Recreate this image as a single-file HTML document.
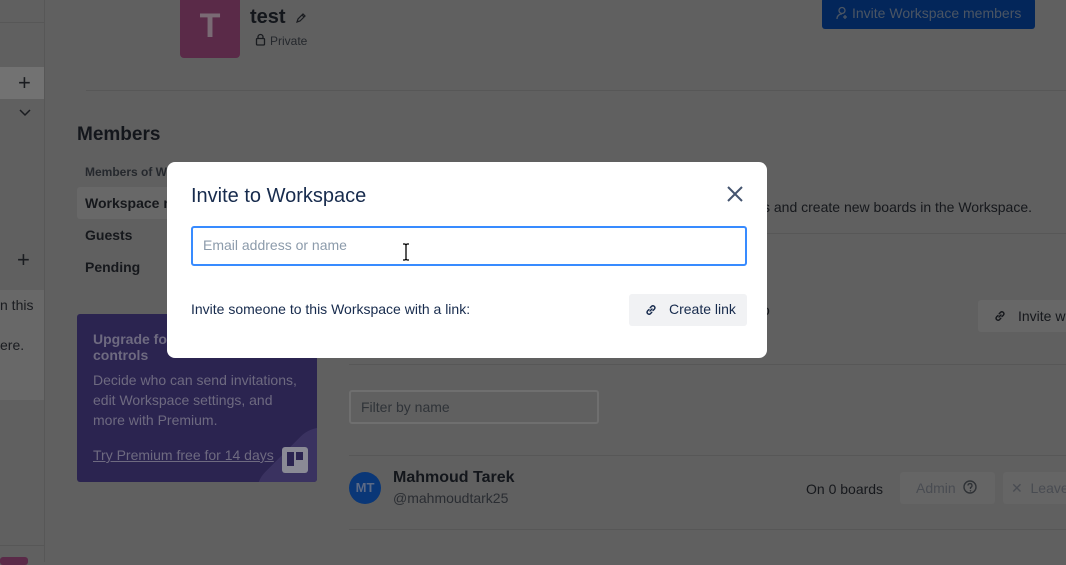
<!DOCTYPE html>
<html><head><meta charset="utf-8"><style>
*{margin:0;padding:0;box-sizing:border-box}
body{width:1066px;height:562px;overflow:hidden;background:#606060;font-family:"Liberation Sans",sans-serif;position:relative;color:#16181c}
.a{position:absolute;white-space:nowrap}
.hr{position:absolute;height:1px;background:#575757}
</style></head><body>
<!-- sidebar -->
<div class="a" style="left:44px;top:0;width:1px;height:562px;background:#575757"></div>
<div class="hr" style="left:0;top:22px;width:44px"></div>
<div class="a" style="left:0;top:67px;width:44px;height:32px;background:#727272"></div>
<div class="a" style="left:18px;top:70px;font-size:22px;color:#1a1c20">+</div>
<svg class="a" style="left:19px;top:109px" width="12" height="8"><path d="M1 1l5 5 5-5" stroke="#1a1c20" stroke-width="1.5" fill="none"/></svg>
<div class="a" style="left:17px;top:247px;font-size:22px;color:#1a1c20">+</div>
<div class="a" style="left:0;top:290px;width:44px;height:110px;background:#686868"></div>
<div class="a" style="left:0;top:297px;font-size:14px;color:#1a1c20">n this</div>
<div class="a" style="left:0;top:337px;font-size:14px;color:#1a1c20">ere.</div>
<div class="hr" style="left:0;top:545px;width:44px"></div>
<div class="a" style="left:0;top:557px;width:28px;height:8px;background:#5a2a48;border-radius:3px"></div>
<!-- header -->
<div class="a" style="left:180px;top:-4px;width:60px;height:62px;background:#5a2a48;border-radius:4px;color:#7a6a74;font-size:34px;font-weight:bold;text-align:center;line-height:60px">T</div>
<div class="a" style="left:250px;top:6px;font-size:20px;font-weight:bold;color:#13161b">test</div>
<svg class="a" style="left:295px;top:12px" width="12" height="12"><path d="M2 10l1-3 5-5 2 2-5 5zM7 3l2 2" stroke="#1a1c20" stroke-width="1.2" fill="none"/></svg>
<svg class="a" style="left:255px;top:33px" width="11" height="13"><rect x="1.5" y="5.5" width="8" height="6.5" rx="1" stroke="#1a1c20" fill="none" stroke-width="1.3"/><path d="M3 5.5V4a2.5 2.5 0 0 1 5 0v1.5" stroke="#1a1c20" fill="none" stroke-width="1.3"/></svg>
<div class="a" style="left:270px;top:34px;font-size:12px;color:#24272c">Private</div>
<div class="a" style="left:822px;top:-2px;width:213px;height:31px;background:#03265a;border-radius:3px;color:#4b5563;font-size:14px;line-height:31px;padding-left:30px">Invite Workspace members</div>
<svg class="a" style="left:836px;top:6px" width="14" height="14"><circle cx="6" cy="4.5" r="3" stroke="#4b5563" fill="none" stroke-width="1.3"/><path d="M1 13c0-3 2-5 5-5M9 9v4M7 11h4" stroke="#4b5563" fill="none" stroke-width="1.3"/></svg>
<div class="hr" style="left:86px;top:90px;width:980px"></div>
<div class="a" style="left:77px;top:124px;font-size:19px;font-weight:bold;color:#13161b">Members</div>
<div class="a" style="left:85px;top:165px;font-size:12px;font-weight:bold;color:#25282d">Members of Workspace</div>
<div class="a" style="left:77px;top:187px;width:120px;height:32px;background:#686868;border-radius:3px"></div>
<div class="a" style="left:85px;top:195px;font-size:14px;font-weight:bold;color:#16181c">Workspace members</div>
<div class="a" style="left:85px;top:227px;font-size:14px;font-weight:bold;color:#16181c">Guests</div>
<div class="a" style="left:85px;top:259px;font-size:14px;font-weight:bold;color:#16181c">Pending</div>
<div class="a" style="left:77px;top:314px;width:240px;height:168px;background:#2b2450;border-radius:3px;overflow:hidden">
 <div class="a" style="left:16px;top:17px;font-size:14px;font-weight:bold;color:#6e6a80;line-height:16px;white-space:normal;width:160px">Upgrade for more controls</div>
 <div class="a" style="left:16px;top:56px;font-size:14px;color:#6e6a80;line-height:20px;white-space:normal;width:215px">Decide who can send invitations, edit Workspace settings, and more with Premium.</div>
 <div class="a" style="left:16px;top:133px;font-size:14px;color:#6e6a80;text-decoration:underline">Try Premium free for 14 days</div>
 <div class="a" style="left:190px;top:124px;width:110px;height:110px;background:#3a3260;border-radius:30px;transform:rotate(45deg)"></div>
 <div class="a" style="left:205px;top:133px;width:26px;height:26px;background:#8a8a95;border-radius:3px"><div class="a" style="left:5px;top:5px;width:7px;height:14px;background:#2b2450"></div><div class="a" style="left:14px;top:5px;width:7px;height:8px;background:#2b2450"></div></div>
</div>
<!-- right content -->
<div class="a" style="left:763px;top:199px;font-size:14px;color:#16181c">s and create new boards in the Workspace.</div>
<div class="hr" style="left:349px;top:233px;width:717px"></div>
<div class="a" style="left:762px;top:302px;font-size:14px;color:#16181c">o</div>
<div class="a" style="left:978px;top:300px;width:100px;height:32px;background:#676767;border-radius:3px;font-size:14px;line-height:32px;padding-left:40px;color:#16181c">Invite w</div>
<svg class="a" style="left:994px;top:310px" width="12" height="12"><path d="M5 7l2-2M4 5.5L2.5 7a2 2 0 0 0 2.8 2.8L6.8 8.3M8 6.5L9.5 5A2 2 0 0 0 6.7 2.2L5.2 3.7" stroke="#16181c" stroke-width="1.4" fill="none" stroke-linecap="round"/></svg>
<div class="hr" style="left:349px;top:364px;width:717px"></div>
<div class="a" style="left:349px;top:390px;width:250px;height:34px;border:2px solid #6f6f6f;border-radius:3px;font-size:14px;line-height:30px;padding-left:10px;color:#2f3338">Filter by name</div>
<div class="hr" style="left:349px;top:455px;width:717px"></div>
<div class="a" style="left:349px;top:472px;width:32px;height:32px;border-radius:50%;background:#0a3777;color:#5c6a85;font-size:13px;font-weight:bold;line-height:32px;text-align:center">MT</div>
<div class="a" style="left:393px;top:469px;font-size:16px;font-weight:bold;color:#13161b">Mahmoud Tarek</div>
<div class="a" style="left:393px;top:490px;font-size:14px;color:#2a2d32">@mahmoudtark25</div>
<div class="a" style="left:806px;top:481px;font-size:14px;color:#16181c">On 0 boards</div>
<div class="a" style="left:900px;top:472px;width:95px;height:32px;background:#656565;border-radius:3px;font-size:14px;line-height:32px;padding-left:16px;color:#494c52">Admin</div>
<svg class="a" style="left:963px;top:480px" width="14" height="14"><circle cx="7" cy="7" r="6" stroke="#2f3236" fill="none" stroke-width="1.4"/><path d="M5 5.5a2 2 0 1 1 2.5 2V9" stroke="#2f3236" fill="none" stroke-width="1.3"/><circle cx="7.5" cy="10.8" r=".8" fill="#2f3236"/></svg>
<div class="a" style="left:1003px;top:472px;width:80px;height:32px;background:#656565;border-radius:3px;font-size:14px;line-height:32px;padding-left:8px;color:#494c52">✕ &nbsp;Leave</div>
<div class="hr" style="left:349px;top:529px;width:717px"></div>
<!-- modal -->
<div class="a" style="left:167px;top:162px;width:600px;height:196px;background:#fff;border-radius:8px">
 <div class="a" style="left:24px;top:23px;font-size:20px;color:#172b4d">Invite to Workspace</div>
 <svg class="a" style="left:560px;top:24px" width="16" height="16"><path d="M1 1l14 14M15 1L1 15" stroke="#44546f" stroke-width="2"/></svg>
 <div class="a" style="left:24px;top:64px;width:556px;height:40px;border:2px solid #388bff;border-radius:3px;font-size:14px;line-height:35px;padding-left:10px;color:#8c9bab">Email address or name</div>
 <svg class="a" style="left:235px;top:81px" width="8" height="18"><path d="M1 1h2l1 1 1-1h2M4 2v14M1 17h2l1-1 1 1h2" stroke="#000" stroke-width="1.3" fill="none"/></svg>
 <div class="a" style="left:24px;top:139px;font-size:14px;color:#172b4d">Invite someone to this Workspace with a link:</div>
 <div class="a" style="left:462px;top:132px;width:118px;height:32px;background:#f1f2f4;border-radius:3px;font-size:14px;line-height:30px;color:#172b4d">
  <svg class="a" style="left:16px;top:10px" width="12" height="12"><path d="M5 7l2-2M4 5.5L2.5 7a2 2 0 0 0 2.8 2.8L6.8 8.3M8 6.5L9.5 5A2 2 0 0 0 6.7 2.2L5.2 3.7" stroke="#172b4d" stroke-width="1.4" fill="none" stroke-linecap="round"/></svg>
  <span class="a" style="left:40px;top:0">Create link</span>
 </div>
</div>
</body></html>
